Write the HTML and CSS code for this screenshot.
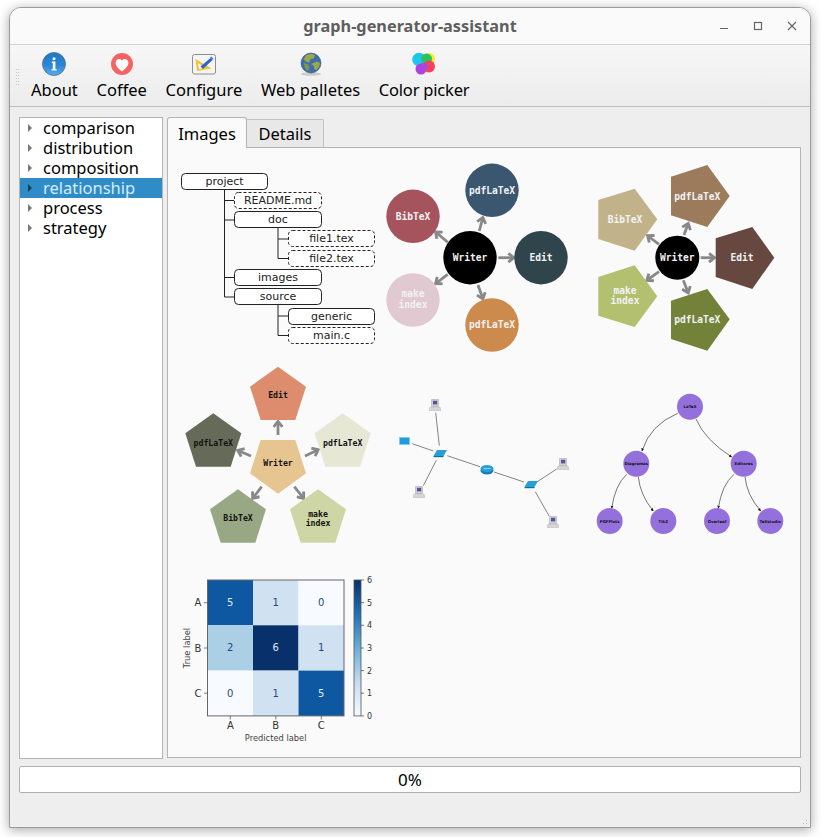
FILE: index.html
```html
<!DOCTYPE html>
<html lang="en">
<head>
    <meta charset="UTF-8">
    <meta name="viewport" content="width=device-width, initial-scale=1.0">
    <title>graph-generator-assistant</title>
    <link rel="stylesheet" href="styles.css">
</head>
<body>
    <div class="window">
        <header class="titlebar">
            <span class="title">graph-generator-assistant</span>
            <div class="win-buttons">
                <svg width="34" height="14" viewBox="0 0 34 14"><path d="M13 9.5h8" class="win-icon"/></svg>
                <svg width="34" height="14" viewBox="0 0 34 14"><rect x="13.5" y="3.5" width="7" height="7" class="win-icon"/></svg>
                <svg width="34" height="14" viewBox="0 0 34 14"><path d="M13 3l8 8M21 3l-8 8" class="win-icon"/></svg>
            </div>
        </header>

        <nav class="toolbar">
            <div class="grip"></div>
            <div class="tool">
                <svg width="26" height="26" viewBox="0 0 26 26">
                    <defs>
                        <linearGradient id="info-blue" x1="0" y1="0" x2="0" y2="1">
                            <stop offset="0" stop-color="#1f78c8"/>
                            <stop offset="0.55" stop-color="#2a86d6"/>
                            <stop offset="1" stop-color="#54aef0"/>
                        </linearGradient>
                    </defs>
                    <circle cx="13" cy="13" r="11.5" fill="url(#info-blue)" stroke="#5a6f80" stroke-width="0.8"/>
                    <circle cx="13" cy="7.7" r="1.5" fill="#fff"/>
                    <path d="M10.8 10.6h3.6v7.6h1.3v1.3h-5.2v-1.3h1.3v-6.3h-1z" fill="#fff"/>
                </svg>
                <span>About</span>
            </div>
            <div class="tool">
                <svg width="26" height="26" viewBox="0 0 26 26">
                    <circle cx="13" cy="13" r="11" fill="#f56363"/>
                    <path d="M13 20.5C8.5 17 6.6 14.6 6.6 11.8c0-2.2 1.7-3.8 3.6-3.8 1.2 0 2.2.6 2.8 1.700.6-1.100 1.600-1.700 2.800-1.700 1.900 0 3.600 1.600 3.600 3.800 0 2.800-1.900 5.200-6.400 8.700z" fill="#fff"/>
                </svg>
                <span>Coffee</span>
            </div>
            <div class="tool">
                <svg width="26" height="26" viewBox="0 0 26 26">
                    <rect x="1.5" y="3.5" width="23" height="19.5" rx="2" fill="#f4f4f4" stroke="#8e8e8e"/>
                    <path d="M4.5 8l16 9.5-14.5 2.5z" fill="#f0c52e"/>
                    <path d="M7 12l7 5-6 1z" fill="#f4f4f4"/>
                    <path d="M9.5 15.5l10-8.5 2 2-9.500 9z" fill="#2f62d8"/>
                    <path d="M19 6.5l1.300-1 2.200 2.200-1 1.300z" fill="#3f7fe8"/>
                </svg>
                <span>Configure</span>
            </div>
            <div class="tool">
                <svg width="26" height="26" viewBox="0 0 26 26">
                    <ellipse cx="13" cy="23" rx="10" ry="1.8" fill="#ccc"/>
                    <circle cx="13" cy="12" r="10" fill="#3f6ea8" stroke="#34507a" stroke-width="0.6"/>
                    <path d="M8 4.5c3-2 7-2 9 0l-1.5 3-3 .5-1 3.500-3-.5-3-2.500zM13 13l6-2.500 3 1.500c-.2 3-1.500 5-3.500 7l-2-.5-.5-3.500z" fill="#9aa94a"/>
                    <path d="M6 12l4 1.5 1.500 3-1.500 3.500c-2.500-1.500-4-4-4-8z" fill="#7f9a46"/>
                </svg>
                <span>Web palletes</span>
            </div>
            <div class="tool">
                <svg width="26" height="26" viewBox="0 0 26 26">
                    <circle cx="18" cy="8" r="6" fill="#ffe928"/>
                    <circle cx="8" cy="8.5" r="6.8" fill="#1cc6f2"/>
                    <circle cx="15.5" cy="8" r="5.5" fill="#27c45c"/>
                    <circle cx="10" cy="18" r="5.5" fill="#b43fe0"/>
                    <circle cx="18" cy="15.5" r="6" fill="#f7405f"/>
                    <circle cx="13" cy="15.5" r="3.8" fill="#a54ad8"/>
                </svg>
                <span>Color picker</span>
            </div>
        </nav>

        <main class="central">
            <div class="panes">
                <ul class="tree">
                    <li class="tree-item">comparison</li>
                    <li class="tree-item">distribution</li>
                    <li class="tree-item">composition</li>
                    <li class="tree-item selected">relationship</li>
                    <li class="tree-item">process</li>
                    <li class="tree-item">strategy</li>
                </ul>

                <section class="tabs">
                    <div class="tab-bar">
                        <div class="tab active">Images</div>
                        <div class="tab">Details</div>
                    </div>
                    <div class="gallery">

                        <!-- folder tree -->
                        <svg class="plot" viewBox="176 155 208 210">
                            <g class="links">
                                <path d="M224.5 189V297M224.5 200.5H234M224.5 220H234M224.5 277.5H234M224.5 297H234"/>
                                <path d="M278 228V258.5M278 239H289M278 258.5H289"/>
                                <path d="M278 305V335.5M278 316H289M278 335.5H289"/>
                            </g>
                            <g class="boxes">
                                <rect x="181.5" y="173.5" width="86" height="16" rx="4"/>
                                <rect class="dashed" x="234.5" y="192.5" width="87" height="16" rx="4"/>
                                <rect x="234.5" y="211.5" width="87" height="16" rx="4"/>
                                <rect class="dashed" x="288.5" y="230.5" width="86" height="16" rx="4"/>
                                <rect class="dashed" x="288.5" y="250.5" width="86" height="16" rx="4"/>
                                <rect x="234.5" y="269.5" width="87" height="16" rx="4"/>
                                <rect x="234.5" y="288.5" width="87" height="16" rx="4"/>
                                <rect x="288.5" y="308.5" width="86" height="16" rx="4"/>
                                <rect class="dashed" x="288.5" y="327.5" width="86" height="16" rx="4"/>
                            </g>
                            <g class="box-text">
                                <text x="224.5" y="185">project</text>
                                <text x="278" y="204">README.md</text>
                                <text x="278" y="223">doc</text>
                                <text x="331.5" y="242">file1.tex</text>
                                <text x="331.5" y="262">file2.tex</text>
                                <text x="278" y="281">images</text>
                                <text x="278" y="300">source</text>
                                <text x="331.5" y="320">generic</text>
                                <text x="331.5" y="339">main.c</text>
                            </g>
                        </svg>

                        <!-- circles -->
                        <svg class="plot" viewBox="384 155 208 210">
                            <defs>
                                <marker id="head" viewBox="0 0 10 10" refX="7" refY="5" markerWidth="11" markerHeight="11" markerUnits="userSpaceOnUse" orient="auto">
                                    <path d="M2.5 1L7.5 5L2.5 9" fill="none" stroke="#888" stroke-width="2.6"/>
                                </marker>
                                <marker id="tip" viewBox="0 0 10 10" refX="9" refY="5" markerWidth="3" markerHeight="3" markerUnits="userSpaceOnUse" orient="auto">
                                    <path d="M0 0L10 5L0 10z" fill="#111"/>
                                </marker>
                            </defs>
                            <g class="arrows">
                                <path d="M479.3 231L482.7 218"/>
                                <path d="M447.7 242.3L436 232.3"/>
                                <path d="M498.3 257.7H513.3"/>
                                <path d="M447.7 274.3L436 283.3"/>
                                <path d="M478 285L482.7 298.3"/>
                            </g>
                            <circle cx="470" cy="257.7" r="26.7" fill="#000"/>
                            <circle cx="492" cy="190.3" r="26.7" fill="#3b566f"/>
                            <circle cx="413" cy="216.3" r="26.7" fill="#a5535d"/>
                            <circle cx="541" cy="257.7" r="26.7" fill="#2f444b"/>
                            <circle cx="413" cy="300" r="26.7" fill="#e0c9d1"/>
                            <circle cx="492" cy="325" r="26.7" fill="#cd8a4d"/>
                            <g class="label light">
                                <text x="470" y="261">Writer</text>
                                <text x="492" y="193.5">pdfLaTeX</text>
                                <text x="413" y="219.5">BibTeX</text>
                                <text x="541" y="261">Edit</text>
                                <text x="413" y="297">make</text>
                                <text x="413" y="307.5">index</text>
                                <text x="492" y="328">pdfLaTeX</text>
                            </g>
                        </svg>

                        <!-- pentagons on their side -->
                        <svg class="plot" viewBox="592 155 208 210">
                            <g class="arrows">
                                <path d="M684 235L688 224"/>
                                <path d="M659 244.3L648 236"/>
                                <path d="M700.7 257.7H714"/>
                                <path d="M659 271.7L647.3 280"/>
                                <path d="M683.3 280.3L688 292.3"/>
                            </g>
                            <circle cx="677.3" cy="257.7" r="22" fill="#000"/>
                            <polygon points="671,176.7 707.3,165 729.7,196 707.3,227 671,215.3" fill="#9c7b5d"/>
                            <polygon points="598.3,200 634.7,188.7 657.3,219.3 634.7,250.7 598.3,239" fill="#c2b28a"/>
                            <polygon points="715.7,238.3 752.3,227 774.3,257.7 752.3,289 715.7,277" fill="#664840"/>
                            <polygon points="598.3,277 634.7,265.3 657.3,296.3 634.7,327 598.3,315.7" fill="#b3c06f"/>
                            <polygon points="671,300.7 707.3,289 729.7,319.3 707.3,350.7 671,339" fill="#728238"/>
                            <g class="label light">
                                <text x="677.3" y="261">Writer</text>
                                <text x="697.3" y="199.5">pdfLaTeX</text>
                                <text x="625" y="222.5">BibTeX</text>
                                <text x="742" y="261">Edit</text>
                                <text x="625" y="293.5">make</text>
                                <text x="625" y="304">index</text>
                                <text x="697.3" y="323">pdfLaTeX</text>
                            </g>
                        </svg>

                        <!-- pentagons upright -->
                        <svg class="plot" viewBox="176 365 208 205">
                            <g class="arrows">
                                <path d="M278 435V422"/>
                                <path d="M251 456L238.3 450.7"/>
                                <path d="M305 456L317.7 450"/>
                                <path d="M261.7 486.7L253 498"/>
                                <path d="M294.3 486.7L303.3 498"/>
                            </g>
                            <polygon points="278,366.7 306,386.7 295.3,420 260.7,420 250,386.7" fill="#dd8d6d"/>
                            <polygon points="213.3,413.3 241.3,433.3 230.7,466.7 196,466.7 185.3,433.3" fill="#666b59"/>
                            <polygon points="342.7,413.3 370.7,433.3 360,466.7 325.3,466.7 314.7,433.3" fill="#e6e7d5"/>
                            <polygon points="295.3,440 306,473.3 278,493.7 250,473.3 260.7,440" fill="#e7c591"/>
                            <polygon points="238,489.3 266,509.3 255.3,542.7 220.7,542.7 210,509.3" fill="#98a884"/>
                            <polygon points="318,489.3 346,509.3 335.3,542.7 300.7,542.7 290,509.3" fill="#ced6a6"/>
                            <g class="label small">
                                <text x="278" y="398">Edit</text>
                                <text x="213.3" y="445.5">pdfLaTeX</text>
                                <text x="342.7" y="445.5">pdfLaTeX</text>
                                <text x="278" y="466">Writer</text>
                                <text x="238" y="521">BibTeX</text>
                                <text x="318" y="517">make</text>
                                <text x="318" y="526">index</text>
                            </g>
                        </svg>

                        <!-- network -->
                        <svg class="plot" viewBox="384 365 208 205">
                            <defs>
                                <symbol id="pc" viewBox="0 0 12 12">
                                    <path d="M2.5 .5h7v7h-7z" fill="#cfcfd4" stroke="#a4a4aa" stroke-width="0.5"/>
                                    <path d="M4 1.8h4.200v3.600H4z" fill="#54549a"/>
                                    <path d="M1 8h10l1 3.500H0z" fill="#d6d6da" stroke="#aaaab0" stroke-width="0.4"/>
                                </symbol>
                            </defs>
                            <g class="net-links">
                                <path d="M435.7 412.7L439.3 445.7"/>
                                <path d="M412.3 443.7L433.3 451"/>
                                <path d="M436.3 460.3L423.3 485.7"/>
                                <path d="M447.3 455.7L480 466.7"/>
                                <path d="M494 472L524 482"/>
                                <path d="M537.3 481.7L556.7 469"/>
                                <path d="M535.3 491.7L549.3 516.3"/>
                            </g>
                            <use href="#pc" x="429" y="399" width="12" height="12"/>
                            <use href="#pc" x="413" y="486" width="12" height="12"/>
                            <use href="#pc" x="557" y="458" width="12" height="12"/>
                            <use href="#pc" x="547" y="516" width="12" height="12"/>
                            <rect x="399.5" y="437.5" width="10" height="7" fill="#1f9be0" stroke="#7cc4ea" stroke-width="0.5"/>
                            <path d="M437 450h10l-3.500 6h-10z" fill="#2a9ed6"/>
                            <path d="M433.500 456h10v1.200h-10z" fill="#126f9e"/>
                            <path d="M528 481h10l-3.500 6h-10z" fill="#2a9ed6"/>
                            <path d="M524.500 487h10v1.200h-10z" fill="#126f9e"/>
                            <ellipse cx="487" cy="470.5" rx="6.5" ry="4" fill="#137fb8"/>
                            <ellipse cx="487" cy="468.5" rx="6.5" ry="3.5" fill="#2a9fd8"/>
                            <path d="M483.5 468.5h7" stroke="#d6eefa" stroke-width="0.6"/>
                        </svg>

                        <!-- purple tree -->
                        <svg class="plot" viewBox="592 365 208 205">
                            <g class="curves">
                                <path d="M677.7 413.3Q650 425 642 451"/>
                                <path d="M696 419Q705 440 731.7 457"/>
                                <path d="M626.7 474.3Q615 485 611.7 508.3"/>
                                <path d="M638.3 476.7Q640 495 653.3 511"/>
                                <path d="M734 474.3Q721.7 485 718.3 508.3"/>
                                <path d="M745 476.7Q746.7 495 760.7 511"/>
                            </g>
                            <g fill="#9370db">
                                <circle cx="690" cy="406.7" r="13"/>
                                <circle cx="636.3" cy="463.7" r="13"/>
                                <circle cx="743.7" cy="463.7" r="13"/>
                                <circle cx="609.7" cy="521" r="13"/>
                                <circle cx="663.3" cy="521" r="13"/>
                                <circle cx="717" cy="521" r="13"/>
                                <circle cx="770.3" cy="521" r="13"/>
                            </g>
                            <g class="tiny">
                                <text x="690" y="408">LaTeX</text>
                                <text x="636.3" y="465">Diagramas</text>
                                <text x="743.7" y="465">Editores</text>
                                <text x="609.7" y="522.5">PGFPlots</text>
                                <text x="663.3" y="522.5">TikZ</text>
                                <text x="717" y="522.5">Overleaf</text>
                                <text x="770.3" y="522.5">TeXstudio</text>
                            </g>
                        </svg>

                        <!-- confusion matrix -->
                        <svg class="plot" viewBox="176 570 208 185">
                            <defs>
                                <linearGradient id="blues" x1="0" y1="0" x2="0" y2="1">
                                    <stop offset="0" stop-color="#08306b"/>
                                    <stop offset="0.25" stop-color="#2171b5"/>
                                    <stop offset="0.5" stop-color="#6baed6"/>
                                    <stop offset="0.75" stop-color="#c6dbef"/>
                                    <stop offset="1" stop-color="#f7fbff"/>
                                </linearGradient>
                            </defs>
                            <rect x="207.5" y="580" width="45.5" height="45.3" fill="#0d58a1"/>
                            <rect x="253" y="580" width="45.5" height="45.3" fill="#d0e1f2"/>
                            <rect x="298.5" y="580" width="45.5" height="45.3" fill="#f7fbff"/>
                            <rect x="207.5" y="625.3" width="45.5" height="45.3" fill="#abd0e6"/>
                            <rect x="253" y="625.3" width="45.5" height="45.3" fill="#08306b"/>
                            <rect x="298.5" y="625.3" width="45.5" height="45.3" fill="#d0e1f2"/>
                            <rect x="207.5" y="670.6" width="45.5" height="45.3" fill="#f7fbff"/>
                            <rect x="253" y="670.6" width="45.5" height="45.3" fill="#d0e1f2"/>
                            <rect x="298.5" y="670.6" width="45.5" height="45.3" fill="#0d58a1"/>
                            <rect class="frame" x="207.5" y="580" width="136.5" height="135.9"/>
                            <rect x="354" y="580" width="7" height="135.9" fill="url(#blues)" stroke="#555" stroke-width="0.8"/>
                            <g class="cell-text">
                                <text class="on-dark" x="230.3" y="606">5</text>
                                <text x="275.8" y="606">1</text>
                                <text x="321.3" y="606">0</text>
                                <text x="230.3" y="651">2</text>
                                <text class="on-dark" x="275.8" y="651">6</text>
                                <text x="321.3" y="651">1</text>
                                <text x="230.3" y="696.5">0</text>
                                <text x="275.8" y="696.5">1</text>
                                <text class="on-dark" x="321.3" y="696.5">5</text>
                            </g>
                            <path class="ticks" d="M204 602.7h3.5M204 648h3.5M204 693.2h3.5M230.3 716v3.5M275.8 716v3.5M321.3 716v3.5M361 580h3M361 602.6h3M361 625.3h3M361 648h3M361 670.6h3M361 693.2h3M361 715.9h3"/>
                            <g class="axis-text">
                                <text x="198" y="606">A</text>
                                <text x="198" y="651.5">B</text>
                                <text x="198" y="696.5">C</text>
                                <text x="230.3" y="729">A</text>
                                <text x="275.8" y="729">B</text>
                                <text x="321.3" y="729">C</text>
                            </g>
                            <g class="bar-text">
                                <text x="367" y="583">6</text>
                                <text x="367" y="605.6">5</text>
                                <text x="367" y="628.3">4</text>
                                <text x="367" y="651">3</text>
                                <text x="367" y="673.6">2</text>
                                <text x="367" y="696.2">1</text>
                                <text x="367" y="718.9">0</text>
                            </g>
                            <text class="axis-title" x="275.7" y="741">Predicted label</text>
                            <text class="axis-title" transform="translate(190 648) rotate(-90)">True label</text>
                        </svg>
                    </div>
                </section>
            </div>

            <div class="progress">0%</div>
        </main>
        <div class="size-grip"></div>
    </div>
</body>
</html>
```

FILE: styles.css
```css
html, body {
    margin: 0;
    height: 837px;
    overflow: hidden;
    background-color: #fff;
}
body {
    font-family: "Noto Sans", sans-serif;
    color: #000;
}
.window {
    position: relative;
    box-sizing: border-box;
    width: 802px;
    height: 821px;
    margin: 7px 0 0 9px;
    border: 1px solid #9a9a9a;
    border-radius: 12px 12px 0 0;
    background-color: #eeeeee;
    box-shadow: 0 2px 12px rgba(0, 0, 0, 0.35);
    overflow: hidden;
    display: flex;
    flex-direction: column;
}
.titlebar {
    position: relative;
    flex: none;
    height: 36px;
    border-bottom: 1px solid #d2d2d2;
    background-color: #fafafa;
    display: flex;
    align-items: center;
    justify-content: flex-end;
}
.title {
    position: absolute;
    left: 0;
    right: 0;
    text-align: center;
    font-size: 16.3px;
    font-weight: 700;
    color: #5f5f5f;
}
.win-buttons {
    display: flex;
    margin-right: 1px;
}
.win-icon {
    fill: none;
    stroke: #666;
    stroke-width: 1.2;
}
.toolbar {
    position: relative;
    flex: none;
    height: 61px;
    border-bottom: 1px solid #bdbdbd;
    background: linear-gradient(#f7f7f7, #ececec);
    display: flex;
    align-items: flex-start;
    gap: 18.7px;
    padding-left: 21px;
}
.grip {
    position: absolute;
    left: 5px;
    top: 23px;
    width: 5px;
    height: 17px;
    background-image: radial-gradient(circle, #b5b5b5 0.6px, transparent 0.8px);
    background-size: 2.5px 3px;
}
.tool {
    display: flex;
    flex-direction: column;
    align-items: center;
    padding-top: 6px;
    font-size: 16.5px;
    line-height: 24px;
}
.tool svg {
    display: block;
}
.tool span {
    margin-top: 1px;
}
.tool:last-child span {
    letter-spacing: -0.2px;
}
.central {
    flex: 1;
    display: flex;
    flex-direction: column;
    padding: 10px 9px 0;
}
.panes {
    display: flex;
    gap: 4px;
    height: 642px;
}
.tree {
    box-sizing: border-box;
    width: 144px;
    height: 642px;
    margin: 0;
    padding: 0;
    list-style: none;
    border: 1px solid #b4b4b4;
    background-color: #fff;
    font-size: 16.5px;
}
.tree-item {
    position: relative;
    height: 20px;
    line-height: 20px;
    padding-left: 23px;
}
.tree-item::before {
    content: "";
    position: absolute;
    left: 8px;
    top: 6px;
    border-left: 4px solid #777;
    border-top: 4px solid transparent;
    border-bottom: 4px solid transparent;
}
.selected {
    background-color: #308cc6;
    color: #d3ecff;
}
.selected::before {
    border-left-color: #173f5c;
}
.tabs {
    flex: 1;
    display: flex;
    flex-direction: column;
}
.tab-bar {
    display: flex;
    height: 30px;
    align-items: flex-end;
    font-size: 16.5px;
}
.tab {
    box-sizing: border-box;
    height: 28px;
    width: 77px;
    line-height: 27px;
    text-align: center;
    border: 1px solid #c2c2c2;
    border-bottom: none;
    border-left: none;
    border-radius: 0 2px 0 0;
    background-color: #e8e8e8;
}
.tab.active {
    height: 31px;
    width: 80px;
    line-height: 31px;
    position: relative;
    z-index: 1;
    margin-bottom: -1px;
    border: 1px solid #b4b4b4;
    border-bottom: none;
    border-radius: 3px 3px 0 0;
    background-color: #fafafa;
}
.gallery {
    box-sizing: border-box;
    height: 611px;
    border: 1px solid #b4b4b4;
    background-color: #fafafa;
    padding: 7px 0 0 8px;
    display: grid;
    grid-template-columns: repeat(3, 208px);
    grid-template-rows: 210px 205px 185px;
}
.plot {
    display: block;
    width: 100%;
    height: 100%;
}
.links {
    fill: none;
    stroke: #222;
    stroke-width: 1;
}
.boxes rect {
    fill: #fff;
    stroke: #222;
    stroke-width: 1;
}
.boxes .dashed {
    stroke-dasharray: 3 2;
}
.box-text text {
    font-family: "DejaVu Sans", sans-serif;
    font-size: 11px;
    fill: #222;
    text-anchor: middle;
}
.arrows path {
    fill: none;
    stroke: #888;
    stroke-width: 2.8;
    marker-end: url(#head);
}
.label text {
    font-family: "DejaVu Sans Mono", monospace;
    font-weight: 700;
    font-size: 9.6px;
    text-anchor: middle;
}
.light text {
    fill: #f2f2f2;
}
.small text {
    font-size: 8.2px;
    fill: #111;
}
.net-links path {
    fill: none;
    stroke: #666;
    stroke-width: 0.8;
}
.curves path {
    fill: none;
    stroke: #555;
    stroke-width: 0.8;
    marker-end: url(#tip);
}
.tiny text {
    font-family: "DejaVu Sans", sans-serif;
    font-weight: 700;
    font-size: 3.9px;
    fill: #111;
    text-anchor: middle;
}
.frame {
    fill: none;
    stroke: #666;
    stroke-width: 1;
}
.cell-text text {
    font-family: "DejaVu Sans", sans-serif;
    font-size: 10px;
    fill: #1f4a85;
    text-anchor: middle;
}
.cell-text .on-dark {
    fill: #dfeaf6;
}
.ticks {
    fill: none;
    stroke: #444;
    stroke-width: 0.7;
}
.axis-text text {
    font-family: "DejaVu Sans", sans-serif;
    font-size: 10px;
    fill: #333;
    text-anchor: middle;
}
.bar-text text {
    font-family: "DejaVu Sans", sans-serif;
    font-size: 8px;
    fill: #333;
}
.axis-title {
    font-family: "DejaVu Sans", sans-serif;
    font-size: 8.3px;
    fill: #444;
    text-anchor: middle;
}
.progress {
    box-sizing: border-box;
    height: 27px;
    margin-top: 7px;
    border: 1px solid #b0b0b0;
    border-radius: 2px;
    background-color: #fff;
    text-align: center;
    line-height: 25px;
    font-size: 17px;
}
.size-grip {
    position: absolute;
    right: 1px;
    bottom: 1px;
    width: 10px;
    height: 10px;
    background-image: radial-gradient(circle, #b5b5b5 0.6px, transparent 0.8px);
    background-size: 3px 3px;
    clip-path: polygon(100% 0, 100% 100%, 0 100%);
}
```
